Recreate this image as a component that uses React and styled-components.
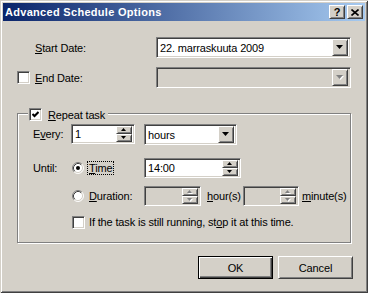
import React from 'react';
import styled, { createGlobalStyle, css } from 'styled-components';

/* ---------- Classic Windows look ---------- */

const GlobalStyle = createGlobalStyle`
  html, body {
    margin: 0;
    padding: 0;
    background: #d4d0c8;
  }
  body {
    font-family: 'Liberation Sans', Arial, sans-serif;
    font-size: 11px;
    letter-spacing: -0.15px;
    color: #000;
  }
`;

const sunken = css`
  box-sizing: border-box;
  border: 1px solid;
  border-color: #808080 #fff #fff #808080;
  box-shadow: inset 1px 1px #404040, inset -1px -1px #d4d0c8;
`;

const raised = css`
  box-sizing: border-box;
  border: 1px solid;
  border-color: #fff #404040 #404040 #fff;
  box-shadow: inset 1px 1px #d4d0c8, inset -1px -1px #808080;
  background: #d4d0c8;
`;

const Window = styled.div`
  width: 368px;
  height: 293px;
  box-sizing: border-box;
  padding: 3px;
  background: #d4d0c8;
  box-shadow: inset 1px 1px #d4d0c8, inset -1px -1px #404040, inset 2px 2px #fff,
    inset -2px -2px #808080;
`;

const TitleBar = styled.div`
  height: 18px;
  display: flex;
  align-items: center;
  padding: 0 2px;
  background: linear-gradient(to right, #0a246a, #a6caf0);
`;

const TitleText = styled.div`
  flex: 1;
  color: #fff;
  font-weight: bold;
  font-size: 11px;
  letter-spacing: 0.3px;
`;

const TitleButton = styled.div`
  ${raised};
  width: 16px;
  height: 14px;
  margin-left: 2px;
  display: flex;
  align-items: center;
  justify-content: center;
  font-weight: bold;
  font-size: 11px;
  line-height: 12px;
`;

const Client = styled.div`
  padding: 16px 0 0 14px;
`;

const FieldRow = styled.div`
  display: flex;
  align-items: center;
  height: 21px;
  width: 334px;
  margin-top: ${p => p.$gap || 0}px;
`;

const CheckSlot = styled.div`
  width: 13px;
  height: 13px;
  margin-right: 5px;
`;

const FieldLabel = styled.div`
  width: 121px;
`;

const Key = styled.u`
  text-decoration: underline;
`;

const Combo = styled.div`
  ${sunken};
  width: ${p => p.$width}px;
  height: 21px;
  display: flex;
  align-items: center;
  padding: 2px;
  background: ${p => (p.$disabled ? '#d4d0c8' : '#fff')};
`;

const ComboText = styled.div`
  flex: 1;
  padding-left: 1px;
  white-space: nowrap;
  overflow: hidden;
`;

const DropButton = styled.div`
  ${raised};
  width: 16px;
  height: 17px;
  display: flex;
  align-items: center;
  justify-content: center;
`;

const Spin = styled.div`
  ${sunken};
  width: ${p => p.$width}px;
  height: 20px;
  display: flex;
  align-items: center;
  padding: 2px;
  background: ${p => (p.$disabled ? '#d4d0c8' : '#fff')};
`;

const SpinText = styled.div`
  flex: 1;
  padding-left: 1px;
`;

const SpinButtons = styled.div`
  display: flex;
  flex-direction: column;
  width: 16px;
  height: 16px;
`;

const SpinButton = styled.div`
  ${raised};
  height: 8px;
  display: flex;
  align-items: center;
  justify-content: center;
`;

const Group = styled.div`
  position: relative;
  margin-top: 25px;
  width: 334px;
  height: 130px;
  box-sizing: border-box;
  border: 1px solid #808080;
  box-shadow: inset 1px 1px #fff, 1px 1px #fff;
  padding: 10px 0 0 15px;
`;

const Legend = styled.div`
  position: absolute;
  top: -6px;
  left: 10px;
  padding: 0 3px 0 1px;
  display: flex;
  align-items: center;
  gap: 6px;
  height: 13px;
  background: #d4d0c8;
`;

const GridRow = styled.div`
  display: grid;
  grid-template-columns: 38px 73px auto;
  align-items: ${p => p.$align || 'center'};
  height: ${p => p.$height || 20}px;
  margin-top: ${p => p.$gap || 0}px;
`;

const RowLabel = styled.div`
  line-height: 20px;
`;

const Cell = styled.div`
  display: flex;
  align-items: center;
  grid-column: ${p => p.$span || 'auto'};
`;

const Choice = styled.div`
  display: flex;
  align-items: center;
  margin-left: 1px;
`;

const ChoiceText = styled.span`
  margin-left: ${p => p.$gap}px;
  white-space: nowrap;
`;

const Focus = styled.span`
  border: 1px dotted #000;
  padding: 0 1px;
  line-height: 15px;
`;

const UnitLabel = styled.span`
  width: ${p => p.$width}px;
  padding-left: ${p => p.$pad}px;
  box-sizing: border-box;
  white-space: nowrap;
`;

const CheckBox = styled.div`
  ${sunken};
  width: 13px;
  height: 13px;
  background: #fff;
  display: flex;
  align-items: center;
  justify-content: center;
  flex-shrink: 0;
`;

const ButtonRow = styled.div`
  display: flex;
  justify-content: flex-end;
  gap: 5px;
  width: 336px;
  margin-top: 13px;
`;

const Button = styled.div`
  ${raised};
  width: 75px;
  height: 23px;
  display: flex;
  align-items: center;
  justify-content: center;
  ${p =>
    p.$default &&
    css`
      border: 1px solid #000;
      box-shadow: inset 1px 1px #fff, inset -1px -1px #404040, inset -2px -2px #808080;
    `}
`;

/* ---------- Little drawings ---------- */

const Arrow = ({ up, small, disabled }) => {
  const w = small ? 5 : 7;
  const h = small ? 3 : 4;
  const pts = up ? `0,${h} ${w},${h} ${w / 2},0` : `0,0 ${w},0 ${w / 2},${h}`;
  return (
    <svg width={w + 1} height={h + 1} viewBox={`0 0 ${w + 1} ${h + 1}`}>
      {disabled && <polygon points={pts} fill="#fff" transform="translate(1,1)" />}
      <polygon points={pts} fill={disabled ? '#808080' : '#000'} />
    </svg>
  );
};

const Check = () => (
  <svg width="7" height="7" viewBox="0 0 7 7">
    <polyline points="0.5,3 2.5,5 6.5,1" fill="none" stroke="#000" strokeWidth="2" />
  </svg>
);

const Radio = ({ checked }) => (
  <svg width="12" height="12" viewBox="0 0 12 12">
    <circle cx="6" cy="6" r="5" fill="#fff" />
    <path d="M2.11 9.89 A5.5 5.5 0 0 1 9.89 2.11" fill="none" stroke="#808080" />
    <path d="M9.89 2.11 A5.5 5.5 0 0 1 2.11 9.89" fill="none" stroke="#fff" />
    <path d="M2.82 9.18 A4.5 4.5 0 0 1 9.18 2.82" fill="none" stroke="#404040" />
    <path d="M9.18 2.82 A4.5 4.5 0 0 1 2.82 9.18" fill="none" stroke="#d4d0c8" />
    {checked && <circle cx="6" cy="6" r="2" fill="#000" />}
  </svg>
);

const CloseGlyph = () => (
  <svg width="8" height="7" viewBox="0 0 8 7">
    <path d="M0.5 0.5 L7.5 6.5 M7.5 0.5 L0.5 6.5" stroke="#000" strokeWidth="1.6" />
  </svg>
);

const SpinBox = ({ width, value, disabled }) => (
  <Spin $width={width} $disabled={disabled}>
    <SpinText>{value}</SpinText>
    <SpinButtons>
      <SpinButton>
        <Arrow up small disabled={disabled} />
      </SpinButton>
      <SpinButton>
        <Arrow small disabled={disabled} />
      </SpinButton>
    </SpinButtons>
  </Spin>
);

const ComboBox = ({ width, value, disabled }) => (
  <Combo $width={width} $disabled={disabled}>
    <ComboText>{value}</ComboText>
    <DropButton>
      <Arrow disabled={disabled} />
    </DropButton>
  </Combo>
);

/* ---------- Dialog ---------- */

export default function App() {
  return (
    <>
      <GlobalStyle />
      <Window>
        <TitleBar>
          <TitleText>Advanced Schedule Options</TitleText>
          <TitleButton>?</TitleButton>
          <TitleButton>
            <CloseGlyph />
          </TitleButton>
        </TitleBar>

        <Client>
          <FieldRow>
            <CheckSlot />
            <FieldLabel>
              <Key>S</Key>tart Date:
            </FieldLabel>
            <ComboBox width={195} value="22. marraskuuta 2009" />
          </FieldRow>

          <FieldRow $gap={9}>
            <CheckSlot as={CheckBox} />
            <FieldLabel>
              <Key>E</Key>nd Date:
            </FieldLabel>
            <ComboBox width={195} value="" disabled />
          </FieldRow>

          <Group>
            <Legend>
              <CheckBox>
                <Check />
              </CheckBox>
              <span>
                <Key>R</Key>epeat task
              </span>
            </Legend>

            <GridRow $align="start" $height={21}>
              <RowLabel>
                E<Key>v</Key>ery:
              </RowLabel>
              <Cell>
                <SpinBox width={64} value="1" />
              </Cell>
              <Cell>
                <ComboBox width={93} value="hours" />
              </Cell>
            </GridRow>

            <GridRow $gap={13}>
              <RowLabel>Until:</RowLabel>
              <Choice>
                <Radio checked />
                <ChoiceText $gap={3}>
                  <Focus>
                    <Key>T</Key>ime
                  </Focus>
                </ChoiceText>
              </Choice>
              <Cell>
                <SpinBox width={97} value="14:00" />
              </Cell>
            </GridRow>

            <GridRow $gap={8}>
              <span />
              <Choice>
                <Radio />
                <ChoiceText $gap={5}>
                  <Key>D</Key>uration:
                </ChoiceText>
              </Choice>
              <Cell>
                <SpinBox width={57} value="" disabled />
                <UnitLabel $width={42} $pad={6}>
                  <Key>h</Key>our(s)
                </UnitLabel>
                <SpinBox width={56} value="" disabled />
                <UnitLabel $width={50} $pad={3}>
                  <Key>m</Key>inute(s)
                </UnitLabel>
              </Cell>
            </GridRow>

            <GridRow $gap={6}>
              <span />
              <Cell $span="2 / 4">
                <Choice>
                  <CheckBox />
                  <ChoiceText $gap={4}>
                    If the task is still running, st<Key>o</Key>p it at this time.
                  </ChoiceText>
                </Choice>
              </Cell>
            </GridRow>
          </Group>

          <ButtonRow>
            <Button $default>OK</Button>
            <Button>Cancel</Button>
          </ButtonRow>
        </Client>
      </Window>
    </>
  );
}
